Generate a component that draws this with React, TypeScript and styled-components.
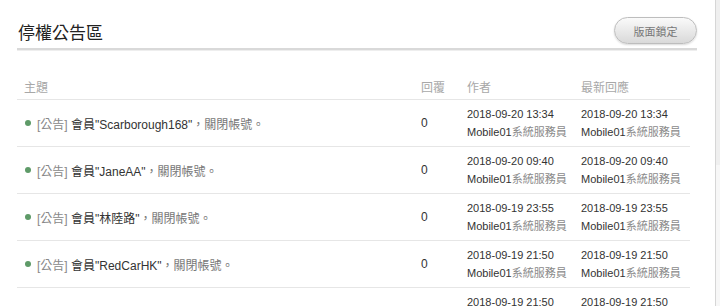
import React from "react";
import styled, { createGlobalStyle } from "styled-components";

const GlobalStyle = createGlobalStyle`
  body {
    margin: 0;
    background: #fff;
    font-family: "Liberation Sans", Arial, "Noto Sans CJK TC", sans-serif;
  }
  * {
    box-sizing: border-box;
  }
`;

const Page = styled.div`
  display: flex;
  width: 720px;
  height: 306px;
  overflow: hidden;
`;

const Main = styled.div`
  width: 697px;
  padding-left: 17px;
  flex: none;
`;

const Side = styled.div`
  margin-left: 18px;
  flex: 1;
  border-left: 1px solid #d6d6d6;
  background: linear-gradient(#efefef 0, #efefef 165px, #f7f7f7 165px);
`;

const Header = styled.div`
  display: flex;
  align-items: flex-start;
  justify-content: space-between;
  height: 50px;
  padding-top: 17px;
  border-bottom: 2px solid #d9d9d9;
  box-shadow: 0 1px 0 #eeeeee;
`;

const Title = styled.h1`
  margin: 3px 0 0 1px;
  font-size: 17px;
  line-height: 24px;
  font-weight: normal;
  color: #222;
  font-family: "Noto Sans CJK TC", sans-serif;
`;

const LockButton = styled.button`
  margin: 0;
  width: 83px;
  height: 27px;
  border-radius: 14px;
  border: 1px solid #bdbdbd;
  background: linear-gradient(#fafafa, #d9d9d9);
  box-shadow: 0 1px 2px rgba(0, 0, 0, 0.15);
  color: #777;
  font-size: 11px;
  font-family: "Noto Sans CJK TC", sans-serif;
`;

const Table = styled.div`
  margin-top: 20px;
  width: 673px;
`;

const Row = styled.div<{ $head?: boolean }>`
  display: grid;
  grid-template-columns: 404px 46px 114px 109px;
  align-items: center;
  height: ${({ $head }) => ($head ? "30px" : "47px")};
  padding-top: ${({ $head }) => ($head ? "3px" : "0")};
  border-bottom: 1px solid #e6e6e6;
`;

const HeadCell = styled.div<{ $pad?: boolean }>`
  padding-left: ${({ $pad }) => ($pad ? "7px" : "0")};
  color: #a8a8a8;
  font-size: 12px;
  font-family: "Noto Sans CJK TC", sans-serif;
`;

const Subject = styled.div`
  display: flex;
  align-items: center;
  padding-left: 8px;
  font-size: 12px;
  color: #333;
`;

const Dot = styled.span`
  width: 6px;
  height: 6px;
  border-radius: 50%;
  background: #5e9a68;
  margin-right: 6px;
`;

const Tag = styled.span`
  color: #888;
`;

const Muted = styled.span`
  color: #777;
  font-family: "Noto Sans CJK TC", sans-serif;
`;

const Count = styled.div`
  font-size: 12px;
  color: #333;
`;

const Meta = styled.div`
  font-size: 11px;
  line-height: 17px;
  color: #333;
`;

const Staff = styled.span`
  color: #8a8a8a;
  font-family: "Noto Sans CJK TC", sans-serif;
`;

const rows = [
  { name: "Scarborough168", date: "2018-09-20 13:34" },
  { name: "JaneAA", date: "2018-09-20 09:40" },
  { name: "林陸路", date: "2018-09-19 23:55" },
  { name: "RedCarHK", date: "2018-09-19 21:50" },
  { name: "ABCD", date: "2018-09-19 21:50" },
];

const MetaBlock: React.FC<{ date: string }> = ({ date }) => (
  <Meta>
    <div>{date}</div>
    <div>
      Mobile01<Staff>系統服務員</Staff>
    </div>
  </Meta>
);

export default function App() {
  return (
    <Page>
      <GlobalStyle />
      <Main>
        <Header>
          <Title>停權公告區</Title>
          <LockButton>版面鎖定</LockButton>
        </Header>
        <Table>
          <Row $head>
            <HeadCell $pad>主題</HeadCell>
            <HeadCell>回覆</HeadCell>
            <HeadCell>作者</HeadCell>
            <HeadCell>最新回應</HeadCell>
          </Row>
          {rows.map((r, i) => (
            <Row key={i}>
              <Subject>
                <Dot />
                <Tag>[公告]</Tag>&nbsp;會員"{r.name}"<Muted>，關閉帳號。</Muted>
              </Subject>
              <Count>0</Count>
              <MetaBlock date={r.date} />
              <MetaBlock date={r.date} />
            </Row>
          ))}
        </Table>
      </Main>
      <Side />
    </Page>
  );
}
